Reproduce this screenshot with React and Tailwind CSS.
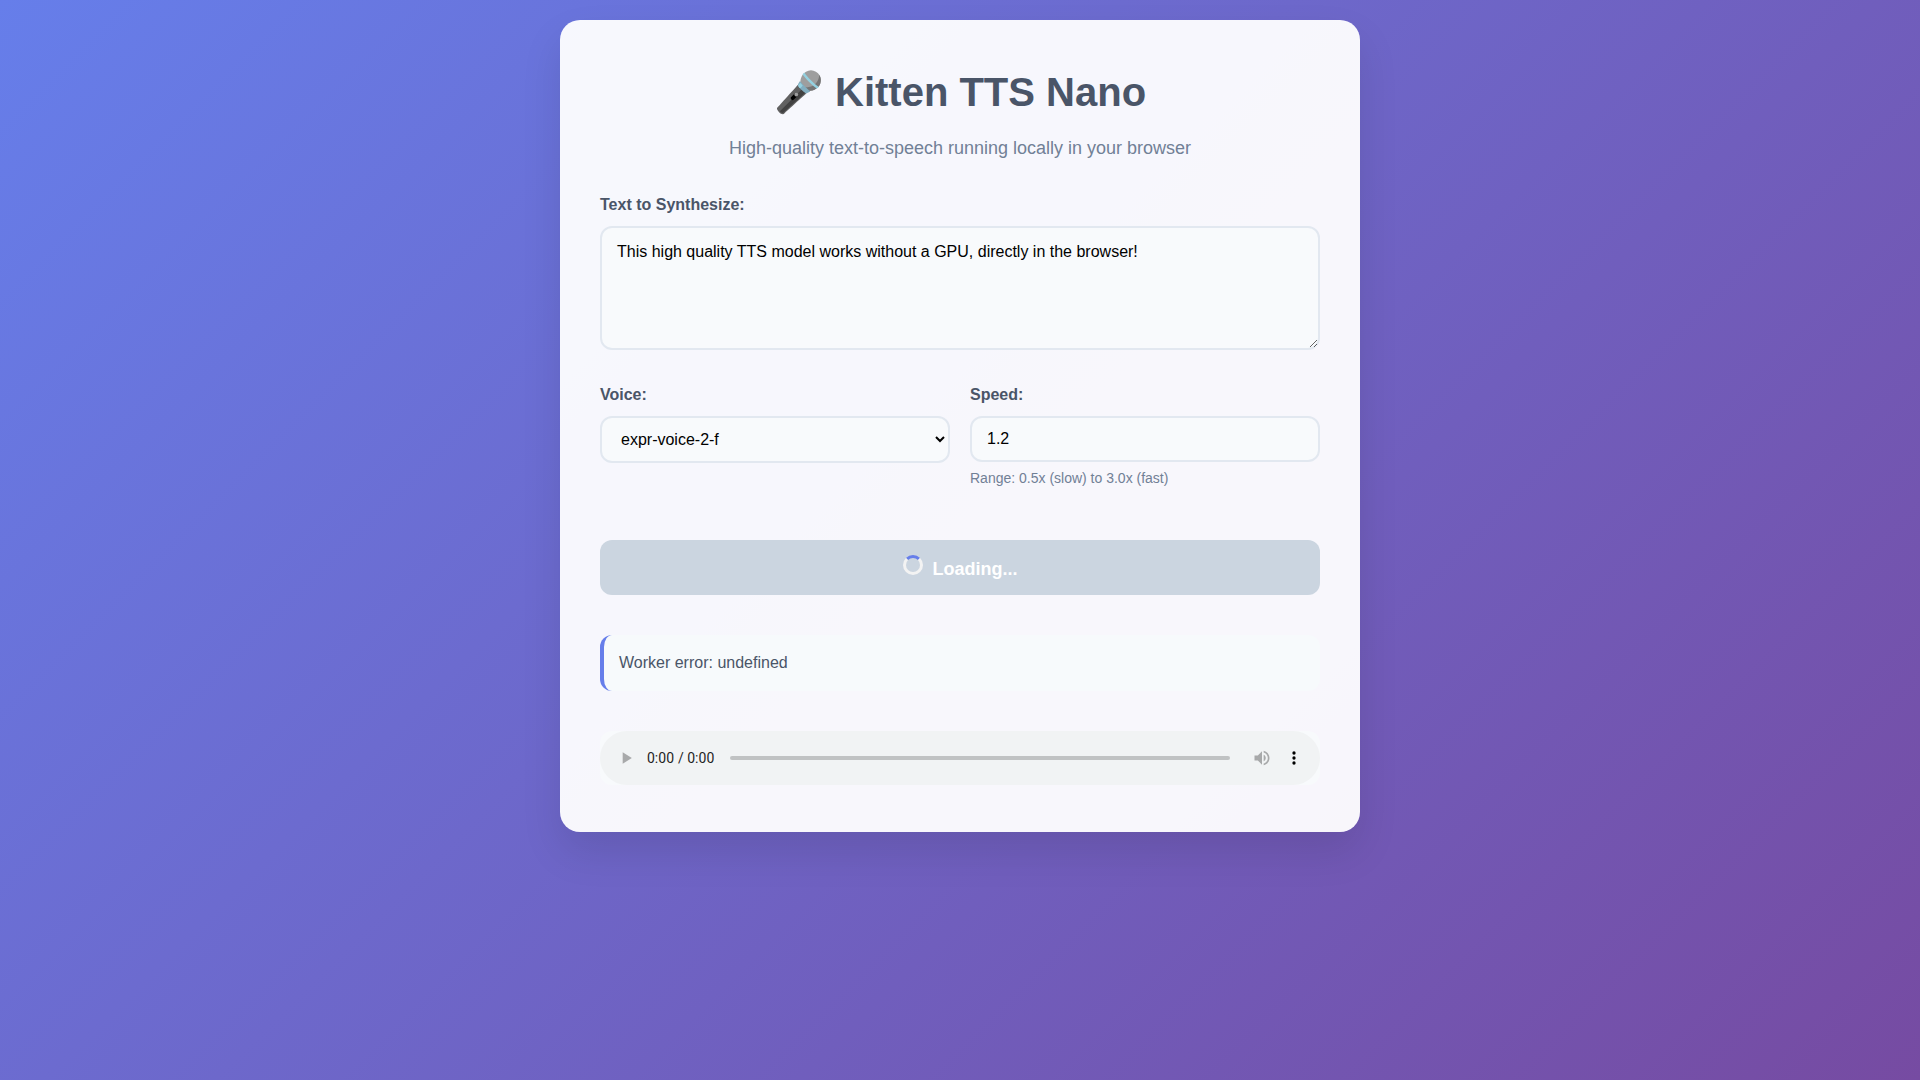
const label = "block mb-2 font-semibold text-base leading-[26px] text-[#4a5568]";
const field = "block w-full rounded-xl border-2 border-[#e2e8f0] bg-[#f8fafc] text-base text-black outline-none";

export default function App() {
  return (
    <div className="min-h-screen bg-[linear-gradient(135deg,#667eea_0%,#764ba2_100%)] p-5 font-['Liberation_Sans',Arial,sans-serif] text-base text-[#333]">
      <main className="mx-auto w-full max-w-[800px] rounded-[20px] bg-white/95 p-10 shadow-[0_20px_40px_rgba(0,0,0,0.1)]">
        <h1 className="mb-2.5 text-center text-[40px] leading-[64px] font-bold text-[#4a5568]">🎤 Kitten TTS Nano</h1>
        <p className="mb-[30px] text-center text-lg leading-7 text-[#718096]">High-quality text-to-speech running locally in your browser</p>

        <div className="mb-8">
          <label htmlFor="text" className={label}>Text to Synthesize:</label>
          <textarea
            id="text"
            className={field + " h-[124px] resize-y p-[15px] leading-[18px]"}
            defaultValue="This high quality TTS model works without a GPU, directly in the browser!"
          />
        </div>

        <div className="mb-[50px] grid grid-cols-2 gap-5">
          <div>
            <label htmlFor="voice" className={label}>Voice:</label>
            <select id="voice" className={field + " px-[15px] py-3"}>
              <option>expr-voice-2-f</option>
            </select>
          </div>
          <div>
            <label htmlFor="speed" className={label}>Speed:</label>
            <input id="speed" type="number" min="0.5" max="3" step="0.1" defaultValue="1.2" className={field + " px-[15px] py-3 leading-[18px]"} />
            <small className="mt-1 block text-sm leading-6 text-[#718096]">Range: 0.5x (slow) to 3.0x (fast)</small>
          </div>
        </div>

        <button type="button" disabled className="block w-full rounded-xl bg-[#cbd5e0] p-[15px] text-lg leading-[normal] font-semibold text-white">
          <span className="mr-2.5 inline-block size-5 rounded-full border-[3px] border-[#f3f3f3] border-t-[#667eea]" />
          Loading...
        </button>

        <div role="status" className="mt-10 rounded-xl border-l-4 border-[#667eea] bg-[#f7fafc] p-[15px] leading-[26px] text-[#4a5568]">
          Worker error: undefined
        </div>

        <audio controls aria-label="Synthesized speech" className="mt-10 mb-[7px] h-[54px] w-full rounded-xl bg-[#f8fafc]" />
      </main>
    </div>
  );
}
